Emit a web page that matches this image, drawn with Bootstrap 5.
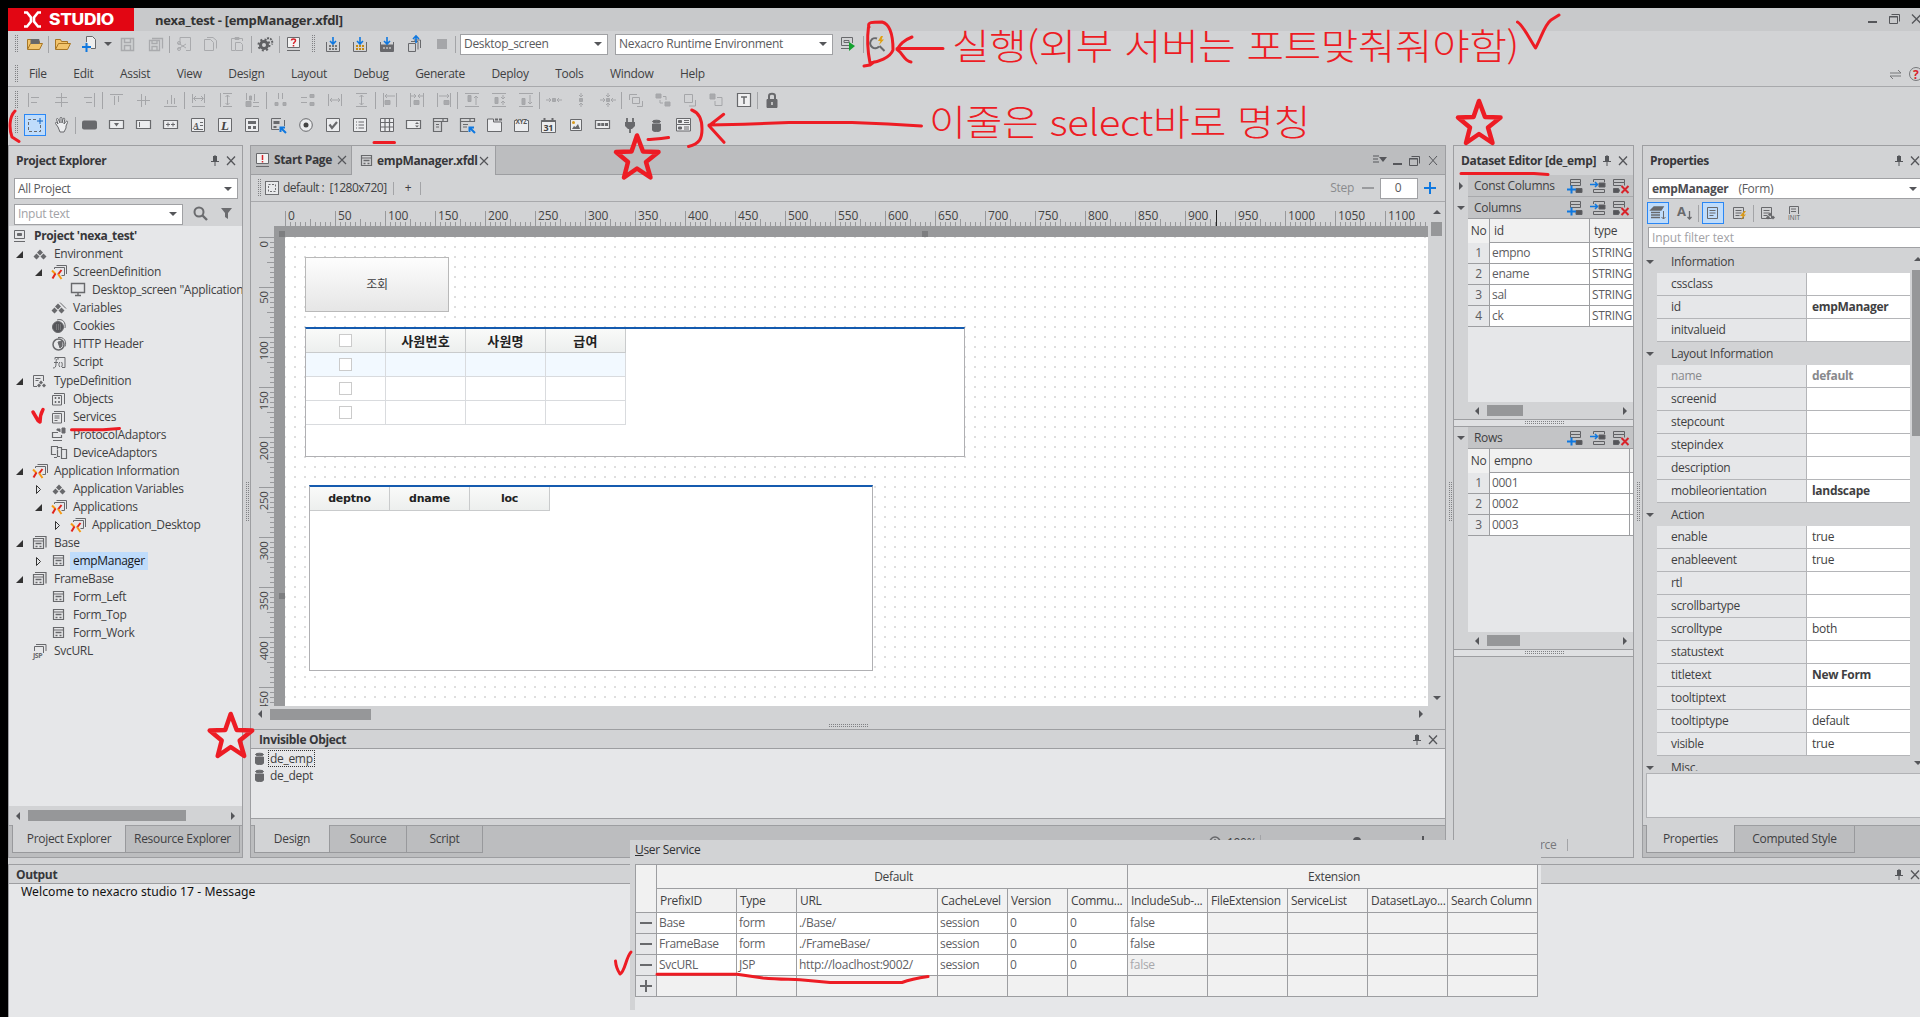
<!DOCTYPE html>
<html lang="ko">
<head>
<meta charset="utf-8">
<title>nexa_test - [empManager.xfdl]</title>
<link href="https://cdn.jsdelivr.net/npm/bootstrap@5.3.0/dist/css/bootstrap.min.css" rel="stylesheet">
<style>
:root{--bg:#d2d3d5;--line:#9d9ea1;--pale:#e6e7e9;--dark:#bcbdbf;--ink:#3f3f42;--dim:#67676b}
html,body{width:1920px;height:1017px;overflow:hidden;background:#000}
body{font-family:"Open Sans","Noto Sans","Noto Sans CJK KR",sans-serif;font-size:12px;line-height:16px;letter-spacing:-.3px;color:var(--ink);padding:8px 0 0 8px}
svg{display:block;flex:none;overflow:visible}
.studio{width:1912px;height:1009px;background:var(--bg);overflow:hidden;position:relative}
.titlebar{height:23px;background:#c8c9cb}
.brand{width:126px;height:23px;background:#e20613}
.doc-title{margin-left:21px;font-size:13px;font-weight:700;letter-spacing:-.3px;color:#333}
.dots{background-image:conic-gradient(#808184 0 25%,transparent 0);background-size:2px 2px;flex:none}
.dots-v{width:4px;height:18px;margin:0 4px 0 6px}
.bar-line{border-bottom:1px solid #a8a9ac}
.slot{width:27px;height:24px;flex:none;display:flex;align-items:center;justify-content:center}
.vsep{width:1px;height:17px;background:#a3a4a7;flex:none}
.picked{width:22px;height:22px;background:#bfdcfb;border:1px solid #2a87f5}
.field{background:#fff;border:1px solid #a0a1a4;height:21px;padding:0 5px 0 3px;color:#5a5a5d;flex:none}
.tri-d{width:0;height:0;border:4px solid transparent;border-top:4px solid #55565a;border-bottom:0;flex:none}
.tri-u{width:0;height:0;border:4px solid transparent;border-bottom:4px solid #55565a;border-top:0;flex:none}
.tri-l{width:0;height:0;border:4px solid transparent;border-right:4px solid #55565a;border-left:0;flex:none}
.tri-r{width:0;height:0;border:4px solid transparent;border-left:4px solid #55565a;border-right:0;flex:none}
.pane{border:1px solid var(--line);background:var(--bg);overflow:hidden;flex:none}
.heading{font-weight:700;color:#37373a;letter-spacing:-.35px}
.pale{background:var(--pale)}
.thumb{background:#969799;height:11px;flex:none}
.tree-item{height:18px;padding-right:0;white-space:nowrap}
.tree-item .exp{width:20px;display:flex;justify-content:center;flex:none}
.tree-item .ico{width:22px;display:flex;justify-content:center;flex:none}
.tree-item .txt{padding:0 2px 0 3px;height:18px;line-height:17px}
.tree-item .lit{background:#bfdcfb;color:#17171a;padding-right:3px}
.foot{height:32px;background:var(--dark);border-top:1px solid var(--line);padding-left:2px}
.foot .ftab{height:27px;border:1px solid #98999c;border-top:0;margin-right:-1px;display:flex;align-items:center;justify-content:center;flex:none}
.foot .on{background:var(--bg);margin-top:-1px;height:28px}
.dtab{height:29px;flex:none;border-right:1px solid var(--line);border-bottom:1px solid var(--line);padding-left:5px}
.screen-size{margin-left:3px;letter-spacing:-.5px}
.canvas{background:#98999b;width:1154px;height:480px;padding:11px 0 0 11px}
.paper{position:relative;width:1143px;height:469px;background:#fff radial-gradient(#dedede 1.2px,transparent 1.3px);background-size:10px 10px;background-position:5px 5px;overflow:hidden}
.knob{position:absolute;width:6px;height:6px;background:#7d7e80}
.f-btn{position:absolute;left:20px;top:20px;width:144px;height:55px;border:1px solid #b9b9b9;background:linear-gradient(#fdfdfd,#e6e6e6)}
.f-grid{position:absolute;background:#fff;border:1px solid #b0b0b3;border-top:2px solid #155baf}
.f-row{height:24px;width:320px}
.f-sel{background:#f2f9ff}
.f-row>div{width:80px;border-right:1px solid #d9dbde;border-bottom:1px solid #d9dbde;display:flex;align-items:center;justify-content:center;flex:none}
.f-head>div{background:linear-gradient(#f9faf9,#edefee);border-color:#c9cbcc;font:700 11px "DejaVu Sans","Noto Sans CJK KR",sans-serif;letter-spacing:-.2px;color:#222}
.f-head>.ko{font-size:13px;letter-spacing:.2px}
.f-box{width:13px;height:13px;border:1px solid #cbcbcb;background:#fff}
.ds-bar{height:21px;background:#c3c4c6;margin-left:14px;padding-left:6px}
.ds-grid{margin-left:14px;background:var(--pale)}
.ds-row{height:21px;border-bottom:1px solid var(--line);background:#fff;color:#5c5c60}
.ds-row>div{border-right:1px solid var(--line);padding-left:2px;line-height:20px;flex:none;overflow:hidden}
.ds-row>.rest{flex:1 1 0;border-right:0}
.ds-row .no{width:22px;background:var(--pale);text-align:center;padding:0}
.ds-top,.ds-top .no{height:24px;background:#f1f1f1!important;color:var(--ink)}
.ds-top>div{line-height:24px;padding-left:4px}
.strip{height:8px;border-top:1px solid var(--line);border-bottom:1px solid var(--line);background:#dfe0e2;flex:none}
.p-row{height:23px;flex:none}
.p-row .gut{width:14px;flex:none}
.p-row .key{width:150px;background:var(--pale);border-bottom:1px solid #b4b5b8;border-right:1px solid #b4b5b8;padding-left:14px;line-height:22px;flex:none}
.p-row .val{width:103px;background:#fff;border-bottom:1px solid #b4b5b8;padding-left:5px;line-height:22px;flex:none;white-space:nowrap}
.p-cat{height:23px;padding-left:3px;flex:none}
.us{position:absolute;left:622px;top:832px;width:911px;height:170px;background:var(--pale);border-left:5px solid var(--bg)}
.us-title{height:25px;background:var(--bg);border-bottom:1px solid var(--line);color:#2f2f32;line-height:20px}
.us table{border-collapse:collapse;table-layout:fixed;width:903px;color:#606064;margin-top:-1px}
.us td,.us th{border:1px solid var(--line);height:21px;padding:0 0 0 2px;line-height:18px;font-weight:400;background:#fff;overflow:hidden;white-space:nowrap}
.us th{height:24px;background:#f1f1f1;color:var(--ink);padding-left:3px}
.us td.off{background:#f1f1f1}.us td.pl{background:var(--pale);padding-left:4px}
.log{padding-left:12px;color:#111;font:12.200px/16px "Noto Sans","DejaVu Sans",sans-serif;letter-spacing:.03px}
.marks{position:absolute;left:-8px;top:-8px;z-index:9;pointer-events:none}
</style>
<script src="https://cdn.jsdelivr.net/npm/bootstrap@5.3.0/dist/js/bootstrap.bundle.min.js"></script>
</head>
<body>
<div class="studio d-flex flex-column">
  <div class="titlebar d-flex align-items-center flex-shrink-0">
    <div class="brand"><svg width="126" height="23"><g fill="none" stroke="#fff" stroke-width="2.6"><path d="M16 4.5h3l4 5v4l-4 5h-3"/><path d="M33 4.500h-3l-4 5v4l4 5h3"/></g><text x="41" y="16.500" fill="#fff" font-family="Inter,Roboto,sans-serif" font-weight="800" font-size="15.500" textLength="65" lengthAdjust="spacingAndGlyphs">STUDIO</text></svg></div>
    <div class="doc-title">nexa_test - [empManager.xfdl]</div>
    <div class="ms-auto d-flex align-items-center"><svg width="60" height="23" fill="none" stroke="#55565a"><path d="M8 14h9" stroke-width="2"/><path d="M29.500 8.500h8v7h-8zM31.500 6.500h8v7M29 9h9"/><path d="M52 6.500l9 9M61 6.500l-9 9" stroke-width="1.300"/></svg></div>
  </div>

  <div class="d-flex align-items-center flex-shrink-0" style="height:26px" id="bar1"></div>

  <div class="d-flex align-items-center flex-shrink-0 bar-line pt-1" style="height:30px">
    <div class="dots dots-v"></div>
    <div class="d-flex" id="menus" style="margin-left:7px;gap:26.5px"></div>
    <svg class="ms-auto" width="30" height="18" fill="none" stroke="#77787b"><path d="M0 8h11l-3-3M11 11H0l3 3"/><circle cx="26" cy="9" r="6.500"/><text x="23" y="13.500" fill="#d8232a" stroke="none" font-size="12" font-weight="700">?</text></svg>
  </div>

  <div class="d-flex align-items-center flex-shrink-0" style="height:26px" id="bar2"></div>
  <div class="d-flex align-items-center flex-shrink-0" style="height:24px" id="bar3"></div>

  <div class="d-flex flex-shrink-0" style="height:713px;margin-top:8px">

    <!-- Project explorer -->
    <section class="pane d-flex flex-column" style="width:235px">
      <div class="d-flex align-items-center flex-shrink-0" style="height:32px;padding:0 6px 2px 7px"><span class="heading">Project Explorer</span><span class="ms-auto" data-i="pinx"></span></div>
      <div class="field d-flex align-items-center justify-content-between" style="width:224px;margin-left:5px">All Project<i class="tri-d"></i></div>
      <div class="d-flex align-items-center" style="margin:4px 0 0 5px;height:22px">
        <div class="field d-flex align-items-center justify-content-between" style="width:169px;color:#a2a2a6">Input text<i class="tri-d"></i></div>
        <svg class="ms-2" width="46" height="18" fill="none" stroke="#6b6c6f"><circle cx="8" cy="7" r="4.500" stroke-width="2"/><path d="M11 10l5 5" stroke-width="2.400"/><path d="M30 3h11l-4 5v6l-3-2V8z" fill="#6b6c6f" stroke="none"/></svg>
      </div>
      <div class="pale flex-grow-1 overflow-hidden" style="margin-top:1px;padding-top:1px" id="tree"></div>
      <div class="d-flex align-items-center flex-shrink-0" style="height:19px;padding:0 7px"><i class="tri-l"></i><div class="thumb" style="width:158px;margin-left:8px"></div><i class="tri-r ms-auto"></i></div>
      <div class="foot d-flex flex-shrink-0" style="padding-left:3px"><div class="ftab on" style="width:114px">Project Explorer</div><div class="ftab" style="width:115px">Resource Explorer</div></div>
    </section>

    <div class="d-flex align-items-center justify-content-center" style="width:7px"><div class="dots" style="width:4px;height:40px"></div></div>

    <!-- Form editor -->
    <section class="pane d-flex flex-column" style="width:1196px">
      <div class="d-flex flex-shrink-0" style="height:29px;background:var(--dark)">
        <div class="dtab d-flex align-items-center heading" style="width:101px"><span data-i="start"></span><span style="margin-left:4px">Start Page</span><span class="ms-auto me-1" data-i="x"></span></div>
        <div class="dtab d-flex align-items-center heading border-bottom-0" style="width:144px;padding-left:9px;background:var(--bg)"><span data-i="form"></span><span style="margin-left:4px">empManager.xfdl</span><span class="ms-auto" style="margin-right:6px" data-i="x"></span></div>
        <div class="flex-grow-1 d-flex align-items-center justify-content-end" style="border-bottom:1px solid var(--line)"><svg width="72" height="16" fill="none" stroke="#55565a"><path d="M0 4h6M0 7h5M0 10h6"/><path d="M6 5h8l-4 5z" fill="#55565a" stroke="none"/><path d="M20 12h9" stroke-width="2"/><path d="M36.500 6.500h8v7h-8zM38.500 4.500h8v7M36 7h9"/><path d="M56 4l8 9M64 4l-8 9"/></svg></div>
      </div>
      <div class="d-flex align-items-center flex-shrink-0 bar-line" style="height:27px">
        <div class="dots dots-v"></div><svg width="15" height="15" fill="#e9eaec" stroke="#6e6f72"><rect x=".5" y=".5" width="13" height="13"/><rect x="3.500" y="3.500" width="7" height="7" stroke-dasharray="2 1.500"/></svg>
        <span class="screen-size">default :&nbsp; [1280x720]</span><i class="vsep" style="margin-left:6px;height:13px"></i><span style="margin-left:11px;width:12px">+</span><i class="vsep" style="margin-left:3px;height:13px"></i>
        <span class="ms-auto" style="color:#8a8b8e">Step</span><svg class="ms-2" width="12" height="12"><path d="M0 6h12" stroke="#9a9b9e" stroke-width="2"/></svg>
        <div class="field d-flex align-items-center justify-content-center" style="width:38px;margin-left:6px">0</div>
        <svg style="margin:0 5px" width="17" height="14"><path d="M1 7h12M7 1v12" stroke="#0f78e0" stroke-width="2"/></svg>
      </div>
      <div class="d-flex flex-shrink-0" style="height:504px">
        <svg id="vrule" width="23" height="504"></svg>
        <div><svg id="hrule" width="1154" height="24"></svg>
          <div class="canvas position-relative">
            <i class="knob" style="left:5px;top:5px"></i><i class="knob" style="left:648px;top:5px"></i><i class="knob" style="left:5px;top:367px"></i>
            <div class="paper">
              <div class="f-btn d-flex align-items-center justify-content-center">조회</div>
              <div class="f-grid" style="left:20px;top:90px;width:660px;height:130px">
                <div class="f-row f-head d-flex"><div><i class="f-box"></i></div><div class="ko">사원번호</div><div class="ko">사원명</div><div class="ko">급여</div></div>
                <div class="f-row f-sel d-flex"><div><i class="f-box"></i></div><div></div><div></div><div></div></div>
                <div class="f-row d-flex"><div><i class="f-box"></i></div><div></div><div></div><div></div></div>
                <div class="f-row d-flex"><div><i class="f-box"></i></div><div></div><div></div><div></div></div>
              </div>
              <div class="f-grid" style="left:24px;top:248px;width:564px;height:186px"><div class="f-row f-head d-flex"><div>deptno</div><div>dname</div><div>loc</div></div></div>
            </div>
          </div></div>
        <div class="d-flex flex-column align-items-center" style="width:17px"><i class="tri-u" style="margin-top:8px"></i><div style="width:11px;height:14px;background:#969799;margin-top:8px"></div><i class="tri-d mt-auto" style="margin-bottom:6px"></i></div>
      </div>
      <div class="d-flex align-items-center flex-shrink-0" style="height:16px;padding:0 22px 0 7px"><i class="tri-l"></i><div class="thumb" style="width:101px;margin-left:8px"></div><i class="tri-r ms-auto"></i></div>
      <div class="d-flex justify-content-center flex-shrink-0 bar-line" style="height:8px;border-color:var(--line)"><div class="dots" style="width:40px;height:4px;margin-top:2px"></div></div>
      <div class="d-flex align-items-center flex-shrink-0 bar-line" style="height:19px;padding:1px 7px 0 8px;border-color:var(--line)"><span class="heading">Invisible Object</span><span class="ms-auto" data-i="pinx"></span></div>
      <div class="pale flex-shrink-0" style="height:70px;border-bottom:1px solid var(--line);padding:1px 0 0 4px">
        <div class="d-flex align-items-center" style="height:17px"><span data-i="db"></span><span style="border:1px dotted #333;padding:0 1px;margin-left:3px;line-height:15px">de_emp</span></div>
        <div class="d-flex align-items-center" style="height:17px"><span data-i="db"></span><span style="margin-left:5px">de_dept</span></div>
      </div>
      <div class="foot d-flex mt-auto flex-shrink-0" style="padding-left:3px"><div class="ftab on" style="width:76px">Design</div><div class="ftab" style="width:78px">Source</div><div class="ftab" style="width:77px">Script</div>
        <div class="ms-auto d-flex" style="width:236px;height:26px;padding-top:9px"><svg width="14" height="14" fill="none" stroke="#66676a" stroke-width="1.500"><circle cx="6" cy="7" r="5"/><path d="M6 4v3h3"/></svg><span class="ms-1">100%</span><i class="vsep" style="margin-left:4px"></i><svg class="ms-1" width="170" height="14"><path d="M0 6h9" stroke="#55565a" stroke-width="2"/><circle cx="92" cy="6" r="4" fill="#55565a"/><path d="M158 1v10M153 6h10" stroke="#55565a" stroke-width="2"/></svg></div></div>
    </section>

    <div class="d-flex align-items-center justify-content-center" style="width:7px"><div class="dots" style="width:4px;height:40px"></div></div>

    <!-- Dataset editor -->
    <section class="pane d-flex flex-column" style="width:181px">
      <div class="d-flex align-items-center flex-shrink-0" style="height:29px;padding:1px 5px 0 7px"><span class="heading text-nowrap">Dataset Editor [de_emp]</span><span class="ms-auto" data-i="pinx"></span></div>
      <div class="d-flex align-items-center position-relative"><i class="tri-r position-absolute" style="left:5px"></i><div class="ds-bar bar-line d-flex align-items-center flex-grow-1" style="height:22px">Const Columns<span class="ms-auto" data-i="dsops"></span></div></div>
      <div class="d-flex align-items-center position-relative"><i class="tri-d position-absolute" style="left:3px"></i><div class="ds-bar d-flex align-items-center flex-grow-1">Columns<span class="ms-auto" data-i="dsops"></span></div></div>
      <div class="ds-grid" style="height:184px;border-top:1px solid var(--line)">
        <div class="ds-row ds-top d-flex"><div class="no">No</div><div style="width:100px">id</div><div class="rest">type</div></div>
        <div class="ds-row d-flex"><div class="no">1</div><div style="width:100px">empno</div><div class="rest">STRING</div></div>
        <div class="ds-row d-flex"><div class="no">2</div><div style="width:100px">ename</div><div class="rest">STRING</div></div>
        <div class="ds-row d-flex"><div class="no">3</div><div style="width:100px">sal</div><div class="rest">STRING</div></div>
        <div class="ds-row d-flex"><div class="no">4</div><div style="width:100px">ck</div><div class="rest">STRING</div></div>
      </div>
      <div class="d-flex align-items-center flex-shrink-0" style="height:17px;padding:0 6px 0 21px"><i class="tri-l"></i><div class="thumb" style="width:36px;margin-left:8px"></div><i class="tri-r ms-auto"></i></div>
      <div class="strip d-flex justify-content-center"><div class="dots" style="width:40px;height:4px;margin-top:1px"></div></div>
      <div class="d-flex align-items-center position-relative"><i class="tri-d position-absolute" style="left:3px"></i><div class="ds-bar d-flex align-items-center flex-grow-1">Rows<span class="ms-auto" data-i="dsops"></span></div></div>
      <div class="ds-grid" style="height:184px;border-top:1px solid var(--line)">
        <div class="ds-row ds-top d-flex"><div class="no">No</div><div style="width:140px">empno</div></div>
        <div class="ds-row d-flex"><div class="no">1</div><div style="width:140px">0001</div></div>
        <div class="ds-row d-flex"><div class="no">2</div><div style="width:140px">0002</div></div>
        <div class="ds-row d-flex"><div class="no">3</div><div style="width:140px">0003</div></div>
      </div>
      <div class="d-flex align-items-center flex-shrink-0" style="height:17px;padding:0 6px 0 21px"><i class="tri-l"></i><div class="thumb" style="width:33px;margin-left:8px"></div><i class="tri-r ms-auto"></i></div>
      <div class="strip d-flex justify-content-center"><div class="dots" style="width:40px;height:4px;margin-top:1px"></div></div>
      <div class="mt-auto d-flex align-items-center" style="height:24px;padding-left:86px;color:#77787b">rce<i class="vsep" style="margin-left:10px;height:12px"></i></div>
    </section>

    <div class="d-flex align-items-center justify-content-center" style="width:8px"><div class="dots" style="width:4px;height:40px"></div></div>

    <!-- Properties -->
    <section class="pane d-flex flex-column border-end-0" style="width:278px">
      <div class="d-flex align-items-center flex-shrink-0" style="height:32px;padding:0 0 2px 7px"><span class="heading">Properties</span><span class="ms-auto" data-i="pinx"></span></div>
      <div class="field d-flex align-items-center border-end-0" style="margin-left:5px"><b style="color:#4c4c50">empManager</b><span style="margin-left:10px">(Form)</span><i class="tri-d ms-auto" style="margin-right:-2px"></i></div>
      <div class="d-flex align-items-center" style="height:28px;padding-left:1px" id="pbar"></div>
      <div class="field d-flex align-items-center border-end-0" style="margin-left:5px;color:#a2a2a6;letter-spacing:-.1px">Input filter text</div>
      <div class="d-flex overflow-hidden" style="height:521px;margin-top:2px">
        <div id="props" style="width:267px"></div>
        <div class="d-flex flex-column align-items-center" style="width:14px;margin-left:2px"><i class="tri-u" style="margin-top:7px"></i><div style="width:12px;height:166px;background:#969799;margin-top:9px"></div><i class="tri-d mt-auto" style="margin-bottom:6px"></i></div>
      </div>
      <div class="pale" style="height:45px;margin:2px 0 0 3px;border:1px solid #b1b2b5;border-right:0"></div>
      <div class="foot d-flex mt-auto flex-shrink-0" style="padding-left:3px"><div class="ftab on" style="width:89px">Properties</div><div class="ftab" style="width:121px">Computed Style</div></div>
    </section>
  </div>

  <!-- Output -->
  <section class="flex-grow-1 pale" style="margin-top:6px;border:1px solid var(--line);border-width:1px 0 0 1px">
    <div class="d-flex align-items-center bar-line" style="height:19px;background:var(--bg);border-color:var(--line);padding:1px 0 0 7px"><span class="heading">Output</span><span class="ms-auto" data-i="pinx"></span></div>
    <div class="log">Welcome to nexacro studio 17 - Message</div>
  </section>

  <!-- User service window -->
  <div class="us">
    <div class="us-title"><u>U</u>ser Service</div>
    <table id="us"></table>
  </div>

  <!-- Handwritten notes -->
  <svg class="marks" width="1920" height="1017" fill="none" stroke="#ed1c24" stroke-width="3" stroke-linecap="round" stroke-linejoin="round">
    <path d="M869 27C867 22 872 22 882 22C890 24 893 36 893 50C890 58 878 62 870 63C867 48 867 38 868.500 27M864 66L870 65 874 62"/>
    <path d="M943 48.500H897M912 37C902 41 900 45 897 49.500C903 53 904 61 911 62"/>
    <path d="M1517.500 22C1523 25 1530 40 1535.500 48C1541 38 1545 24 1551 20L1559 15"/>
    <path d="M691.700 110C700 113 702 122 702 129C702 138 700 144 688.500 146.500"/>
    <path d="M921.500 126L888 124 852 122.500H789L744 124.300 709 125M723.700 114.300L709 125.700 724 142.300"/>
    <path d="M15 111C9 117 9 129 12 137L19 141.500M374 142.500H394.500M648 139.500C655 139 660 139 668.500 137.500"/>
    <path d="M1461 173.500H1534L1548 174.600M71.500 429.700H103L119.500 428.500M657 974.300H737L763 978C780 979.700 790 979 800 979.700L830 982.500H902C910 979.500 918 978 928 976.500"/>
    <path d="M33 412L38 420.500 40 422C40 417 41 413 43 409.500" stroke-width="3.500"/>
    <path d="M615.500 961C616 968 618 971 620 974C625 972 626 957 631 952"/>
    <g stroke-width="4.500"><path id="star" d="M637 135.500L643 151.500 658.500 152 646 162 650.500 177.500 637 168.500 624 177.500 628 162 616 152 631.500 151.500Z"/>
    <use href="#star" x="842" y="-34.500"/><use href="#star" x="-406.300" y="578.500"/></g>
    <g fill="#ed1c24" stroke="none" font-family="'Noto Sans CJK KR',sans-serif" font-weight="300" font-size="36.500">
      <text x="952" y="60" textLength="567" lengthAdjust="spacingAndGlyphs">실행(외부 서버는 포트맞춰줘야함)</text>
      <text x="929" y="135.500" font-size="36" textLength="381" lengthAdjust="spacingAndGlyphs">이줄은 select바로 명칭</text>
    </g>
  </svg>
</div>

<script>
const G='#68696c', L='#a9aaad', B='#0f78e0';
const svg=(w,h,body,c=G)=>`<svg width="${w}" height="${h}" fill="none" stroke="${c}">${body}</svg>`;
const win='<path d="M.5.5h13v13H.5z" fill="#ecedef"/>';
const I={
 pinx:svg(25,12,'<path d="M2.500 1v5M5.500 1v5M0 6.500h8M4 7v4" stroke-width="1"/><path d="M3 1h2v5H3z" fill="#55565a"/><path d="M16 1.500l8 8.500M24 1.500l-8 8.500" stroke-width="1.300"/>','#55565a'),
 x:svg(10,10,'<path d="M1 1l8 8M9 1L1 9" stroke-width="1.200"/>','#55565a'),
 start:svg(14,14,'<path d="M.5.5h12v10H.5zM0 13.500h13" fill="#f3f3f3"/><path d="M6.500 2v5M6.500 8v1.500" stroke="#d8232a" stroke-width="1.500"/>'),
 form:svg(12,12,'<path d="M.5.5h10v10H.5zM0 3h11" stroke-width="1.200"/><path d="M2.500 5.500h6M2.500 8.500h2M6.500 8.500h2" stroke-width="1.600"/>'),
 forms:svg(14,14,'<path d="M.5 2.500h10v10H.5zM0 5h11M2 .5h11v11" stroke-width="1.200"/><path d="M2.500 7.500h6M2.500 10.500h2M6.500 10.500h2" stroke-width="1.500"/>'),
 db:svg(10,13,'<path d="M.5 5v6c0 2 8 2 8 0V5z" fill="#68696c"/><ellipse cx="4.500" cy="2.500" rx="4" ry="1.300" fill="#68696c"/>'),
 proj:svg(12,13,'<path d="M.5.5h10v8h-10zM0 11.500h11"/><path d="M3.500 3.500h4v2h-4z" fill="#68696c"/>'),
 env:svg(14,11,'<path d="M7 .5l3 3-3 3-3-3zM3.500 4.500l3 3-3 3-3-3zM10.500 4.500l3 3-3 3-3-3z" fill="#68696c" stroke="none"/>'),
 vars:svg(16,12,'<path d="M7 1.500l3 3-3 3-3-3zM3.500 5.500l3 3-3 3-3-3zM10.500 5.500l3 3-3 3-3-3z" fill="#68696c" stroke="none"/><path d="M9 .5l6 6"/>'),
 xapp:svg(16,14,'<path d="M3.500 4V2.500h10v8h-3M5.500.5h10V9"/><path d="M1 5.500L4.500 9" stroke="#f59a12" stroke-width="2"/><path d="M4.500 8.500L1.500 13.500" stroke="#e2231a" stroke-width="2"/><path d="M10.500 5L7 9.500" stroke="#e2231a" stroke-width="2"/><path d="M7 9l3.500 5" stroke="#f59a12" stroke-width="2"/>'),
 screen:svg(16,14,'<path d="M1.500.5h13v9h-13zM5 12.500h6M8 10v2" stroke-width="1.400"/>'),
 cookie:svg(15,14,'<circle cx="6" cy="8" r="5.500" fill="#55565a"/><path d="M5 1c6-2 9 3 8 8"/><path d="M4 6h5M4 8h5M4 10h5" stroke="#999" stroke-dasharray="1 1"/>'),
 http:svg(15,14,'<circle cx="6.500" cy="7.500" r="5.500" stroke-width="1.500"/><path d="M6 5l4-1v5l-2 2z" fill="#68696c"/><path d="M6 .5c6-1 9 4 7 9"/>'),
 script:svg(14,13,'<path d="M3 3.500V1.500h10v10h-3M7 3c-3-1-3 2-3 5s-1 4-3 4M2 6.500h4M8 6c-1.500 1-1.500 4 0 5M9.500 6c1 1 1 4 0 5"/>'),
 type:svg(14,13,'<path d="M4 11.500H.5V.5h10V6M2.500 3.500h5M2.500 5.500h3"/><path d="M8 5.500l2 2-2 2-2-2zM6 8.500l2 2-2 2-2-2zM11 8.500l2 2-2 2-2-2z" fill="#68696c" stroke="none"/>'),
 obj:svg(14,13,'<path d="M.5 2.500h9v9.500h-9zM2 .5h10.500V11"/><path d="M3 4.500h1v1H3zM6.500 4.500h1v1h-1zM3 8.500h1v1H3zM6.500 8.500h1v1h-1z" fill="#68696c"/>'),
 svc:svg(14,13,'<path d="M.5 2.500h9v9.500h-9zM2 .5h10.500V11M2.500 5h5M2.500 7h5M2.500 9.500h3"/>'),
 prot:svg(16,14,'<path d="M7 4.500H1.500v5h9V7M2 12.500h9" stroke-width="1.200"/><path d="M6 2.500V1h3v3M11 0h3v5h-3z" fill="#68696c"/>'),
 dev:svg(16,14,'<path d="M7 .5H.5v8H5M3 11.500h3M6.500 3V1.500h4V3M6.500 3.500v7H9M10.500 3.500h5v9h-5z" stroke-width="1.200"/>'),
 jsp:svg(14,14,'<path d="M1.500 7V2.500h9V9M3 .5h10V7"/><text x="0" y="13.500" font-size="7" font-weight="700" fill="#68696c" stroke="none" letter-spacing="-.5">JSP</text>'),
 dsops:svg(62,16,'<path d="M3.500 1.500h10v3h-10zM3.500 4.500v3M3.500 7.500h10v-3"/><path d="M9 10.500h6v4H9z" fill="#55565a"/><path d="M0 11.500h9M4.500 7.500v8" stroke="#0f78e0" stroke-width="2"/><path d="M26.500 4V1.500h11V4M26.500 11.500h11v3h-11z"/><path d="M32 5h6v4h-6z" fill="#55565a"/><path d="M23 6.500h7M28 4l2.500 2.500L28 9" stroke="#0f78e0" stroke-width="1.500"/><path d="M46.500 1.500h11v3h-11zM46.500 4.500v3h8M57.500 4.500v3"/><path d="M46.500 10.500h5l1 2-1 2h-5z" fill="#55565a"/><path d="M54.500 8l7 7M61.500 8l-7 7" stroke="#d8232a" stroke-width="2"/>','#606164')
};
document.querySelectorAll('[data-i]').forEach(e=>{e.innerHTML=I[e.dataset.i];if(e.dataset.i==='dsops')e.style.paddingRight='4px'});

/* menu */
menus.innerHTML='File Edit Assist View Design Layout Debug Generate Deploy Tools Window Help'.split(' ').map(t=>`<span>${t}</span>`).join('');

/* main toolbar */
const slot=(s,w=27)=>`<div class="slot" style="width:${w}px">${s}</div>`, sep='<i class="vsep"></i>', grip='<div class="dots dots-v"></div>';
const fold='<path d="M.5 12V2.500h5l1 2h6V7M.5 12.500L3.500 6.500h12l-3 6z" fill="#f2c46c" stroke="#a87624"/>';
const basket=(c,f)=>svg(15,15,`<path d="M.5 5v9.500h13V5"/><path d="M3 9h2M6 9h2M9 9h2M3 12h2M6 12h2M9 12h2" stroke="${c}" stroke-width="2"/>${f}<path d="M7 0v6M4 4l3 3 3-3" stroke="${B}" stroke-width="1.600"/>`);
bar1.innerHTML=grip+slot(svg(16,14,fold+'<path d="M4 2.500h8v4H4z" fill="#666"/>'),26)+sep+slot(svg(16,14,fold))
 +slot(svg(15,16,'<path d="M4.500 6V.5h6l3 3v9H9" fill="#eee"/><path d="M0 11h9M4.500 7v9" stroke="#0f78e0" stroke-width="2"/>'))+slot('<i class="tri-d"></i>',9)
 +slot(svg(13,13,'<path d="M.5.5h12v12H.5zM3.500.5v4h6v-4M3.500 12V7.500h6V12" stroke-width="1.500"/>',L),31)+slot(svg(14,13,'<path d="M.5 2.500h10v10H.5zM3 2.500v3h5v-3M3 12V8.500h5V12M3 .5h10.500v10" stroke-width="1.300"/>',L),26)+sep
 +slot(svg(14,14,'<path d="M3 6V.5h10.500v13H9M1 6l8 5M1 12l8-5"/><circle cx="2" cy="6" r="1.500"/><circle cx="2" cy="12" r="1.500"/>',L))+slot(svg(13,14,'<path d="M.5 2.500h6l3 3v8h-9zM3 .5h6l3.500 3v8"/>',L))+slot(svg(13,14,'<path d="M4 13.500H.5v-12h11V4M4.500 5.500h5l2 2v6h-7zM4 .5h4v2H4z"/>',L))+sep
 +slot(svg(16,14,'<circle cx="6" cy="8" r="3.500" stroke-width="3"/><circle cx="6" cy="8" r="5.500" stroke-width="2" stroke-dasharray="2 2.300"/><path d="M9 1.500c4-1 6 2 5 6" stroke-width="2" stroke-dasharray="2 1"/>','#606164'))+sep
 +slot(svg(14,15,'<path d="M.5.5h12v10H.5zM0 13.500h13" fill="#f3f3f3"/><path d="M4.500 3.500c0-2 4-2 4 0s-2 1.500-2 3.500M6.500 8v1.500" stroke="#d8232a" stroke-width="1.500"/>'),28)
 +'<div style="margin-left:-3px">'+grip+'</div><div style="width:1px"></div>'+slot(basket('#777',''))+slot(basket('#c88a10',''))+slot(basket('#eee','<path d="M1 8h12v6H1z" fill="#68696c"/><path d="M3 11h8" stroke="#eee" stroke-dasharray="2 1"/>'))
 +slot(svg(14,16,'<path d="M.5 7.500h7v8h-7zM3 5.500h7v8M6 4h6.500v8"/><path d="M8 7V1M5 3l3-3 3 3" stroke="#0f78e0" stroke-width="1.600"/>'))+slot('<div style="width:10px;height:10px;background:#a5a6a9"></div>')+sep
 +'<div class="field d-flex align-items-center justify-content-between" style="width:148px;margin-left:4px">Desktop_screen<i class="tri-d"></i></div><div class="field d-flex align-items-center justify-content-between" style="width:218px;margin-left:7px">Nexacro Runtime Environment<i class="tri-d"></i></div>'
 +slot(svg(14,14,'<path d="M8 8.500H.5v-8h11V6M0 11.500h8M3 3.500h5v2H3z"/><path d="M8 5l6 4-6 5z" fill="#12a22e" stroke="none"/>'),30)+sep+slot(svg(16,16,'<path d="M7 2.500a5 5 0 1 0 2 8M9.500 10l5 5" stroke-width="2"/><path d="M11 0L8 5h2.500L9 9l5-5.500h-2.500L13 0z" fill="#e0a010" stroke="none"/>'));

/* alignment toolbar: every glyph is drawn in a 16 x 14 box */
const A=[
 ['<path d="M1.500 0v14M4 4.500h8M4 9.500h6"/>','<path d="M7.500 0v14M2 4.500h11M1 9.500h13"/>','<path d="M13.500 0v14M3 4.500h8M5 9.500h6"/>'],
 ['<path d="M1 1.500h13M5.500 3v9M9.500 3v6"/>','<path d="M1 7.500h13M5.500 1v13M9.500 3v9"/>','<path d="M1 13.500h13M4.500 7v4M8.500 2v9M11.500 5v6"/>'],
 ['<path d="M1.500 1v9M13.500 1v9M3 5.500h9M1 13.500h13M5 3L2.500 5.500 5 8M10 3l2.500 2.500L10 8"/>','<path d="M2.500 0v14M5 .5h9M5 13.500h9M9.500 2v10M7.500 4l2-2 2 2M7.500 10l2 2 2-2"/>','<path d="M1.500 0v7M5.500 3v4M9.500 1v7M8 9.500h6M8 13.500h6"/><path d="M1 8.500h5v5H1zM4.500 3h2v4h-2z" fill="#a9aaad"/>'],
 ['<path d="M5.500 0v6M9.500 0v6"/><path d="M2 9.500h3v3H2zM10 9.500h3v3h-3z" fill="#a9aaad"/>','<path d="M1 4.500h6M1 9.500h6"/><path d="M10 1.500h4v3h-4zM10 9.500h4v3h-4z" fill="#a9aaad"/>','<path d="M1.500 1v12M14.500 1v12M3 7h10M5 5L3 7l2 2M11 5l2 2-2 2"/>','<path d="M2 .5h11M2 13.500h11M7.500 2v10M5.500 4l2-2 2 2M5.500 10l2 2 2-2"/>'],
 ['<path d="M1.500 0v14M14.500 0v14M3 3h10M5 1L3 3l2 2"/><path d="M3 7.500h5v4H3z" fill="#a9aaad"/>','<path d="M1.500 0v14M14.500 0v14M2 3h5M9 3h5M5 1l2 2-2 2M11 1L9 3l2 2"/><path d="M5 7.500h5v4H5z" fill="#a9aaad"/>','<path d="M1.500 0v14M14.500 0v14M3 3h10M11 1l2 2-2 2"/><path d="M8 7.500h5v4H8z" fill="#a9aaad"/>'],
 ['<path d="M1 .5h14M1 13.500h14M12 3v9M10 5l2-2 2 2"/><path d="M4 2.500h3v6H4z" fill="#a9aaad"/>','<path d="M1 .5h14M1 13.500h14M12 2v3M12 9v3M10 4l2 2 2-2M10 10l2-2 2 2"/><path d="M4 4.500h3v6H4z" fill="#a9aaad"/>','<path d="M1 .5h14M1 13.500h14M12 2v9M10 9l2 2 2-2"/><path d="M4 5.500h3v6H4z" fill="#a9aaad"/>'],
 ['<path d="M0 7h5M11 7h5M3 5l2 2-2 2M13 5l-2 2 2 2"/><path d="M6.500 5.500h3v3h-3z" fill="#a9aaad"/>','<path d="M8 0v4M8 10v4M6 2l2 2 2-2M6 12l2-2 2 2"/><path d="M6.500 5.500h3v3h-3z" fill="#a9aaad"/>','<path d="M0 7h5M11 7h5M8 0v4M8 10v4M3 5l2 2-2 2M13 5l-2 2 2 2M6 2l2 2 2-2M6 12l2-2 2 2"/><path d="M6.500 5.500h3v3h-3z" fill="#a9aaad"/>'],
 ['<path d="M4.500 4.500h7v6h-7zM1.500 7V1.500H9M14.500 8v5.500H9"/>','<path d="M1 1h5v4H1zM10 9h5v4h-5z" fill="#a9aaad"/><path d="M8 3.500h3V7M5 7v3h3"/>','<path d="M2.500 1.500h8v8h-8zM13.500 7v6H7"/>','<path d="M1 1h5v5H1z" fill="#a9aaad"/><path d="M8 4.500h5v8H6V8"/>']
];
bar2.innerHTML=grip+'<div style="margin-left:-1px"></div>'+A.map(g=>g.map(p=>slot(svg(16,14,p,'#a5a6a9'))).join('')).join(sep)
 +slot(svg(14,14,'<path d="M.5.5h13v13H.5z" fill="#f0f0f1" stroke-width="1.200"/><path d="M4 4h6M7 4v7" stroke-width="1.500"/>'))+sep+slot(svg(12,15,'<path d="M1 6.500h10v8H1z" fill="#68696c"/><path d="M3 6V3c0-3 6-3 6 0v3" stroke-width="2"/><path d="M6 9v3" stroke="#ddd" stroke-width="1.500"/>'));

/* component toolbar */
const wide='<path d="M.5 2.500h14v8H.5z" fill="#ecedef" stroke-width="1.200"/>', cur='<path d="M15 15l-5-5M9.500 14V9.500H14" stroke="#0f78e0" stroke-width="2"/>';
const C=[
 svg(15,14,'<rect x="0" y="2.500" width="15" height="9" rx="2" fill="#68696c" stroke="none"/>'),
 svg(15,14,wide+'<path d="M5 5h5L7.500 8.500z" fill="#68696c" stroke="none"/>'), svg(15,14,wide+'<path d="M3.500 4v5"/>'), svg(15,14,wide+'<path d="M3 6.500h4M5 4.500v4M8 6.500h4M10 4.500v4"/>'),
 svg(14,14,win+'<text x="2" y="10.500" font-size="9" font-weight="700" font-style="italic" font-family="Liberation Serif" fill="#555" stroke="none">A</text><path d="M9 4.500h3M9 7.500h3M3 11.500h9"/>'),
 svg(14,14,win+'<text x="3" y="11.500" font-size="13" font-weight="700" font-style="italic" font-family="Liberation Serif" fill="#444" stroke="none">L</text>'),
 svg(14,14,win+'<path d="M3 3h8v3H3zM3 8h3v3H3zM8 8h3v3H8z" fill="#68696c" stroke="none"/>'),
 svg(15,15,'<path d="M10 .5H.5v11H8M13.500 2v6"/><path d="M2.500 3h6v3h-6zM2.500 8h3v2h-3z" fill="#68696c" stroke="none"/>'+cur),
 svg(14,14,'<circle cx="7" cy="7" r="6.300" fill="#ecedef"/><circle cx="7" cy="7" r="2.500" fill="#444" stroke="none"/>'),
 svg(14,14,win+'<path d="M3.500 6.500L6 10l5-6" stroke-width="2.200"/>'),
 svg(14,14,win+'<path d="M3 4h1M3 7h1M3 10h1M5.500 4h5.500M5.500 7h5.500M5.500 10h5.500"/>'),
 svg(14,14,win+'<path d="M.5 4.500h13M.5 9h13M5 .5v13M9.500.5v13" stroke-width="1.200"/>'),
 svg(15,14,wide+'<path d="M9 6h4l-2-2zM9 7.500h4l-2 2z" fill="#68696c" stroke="none"/>'),
 svg(15,14,'<path d="M.5.5h14v3H.5zM.5 3.500v10h8v-10M3 6.500h3M3 9h3M10 .5v3" stroke-width="1.200"/>'),
 svg(15,15,'<path d="M.5.5h14v3H.5zM.5 3.500v10H8M3 6.500h5M3 9h4M10 .5v3" stroke-width="1.200"/>'+cur),
 svg(15,14,'<path d="M.5 1h6v3h8v9.500H.5z" fill="#ecedef"/><path d="M8 1.500h3M12 1.500h3" stroke-width="2"/>'),
 svg(15,14,'<path d="M2 2.500H.5v11h14v-11H13" fill="#ecedef"/><text x="1.500" y="5.500" font-size="6.500" font-weight="700" fill="#555" stroke="none" letter-spacing="-.3">XYZ</text>'),
 svg(15,15,'<path d="M.5 2.500h14v12H.5z" fill="#ecedef"/><path d="M.5 3h14M3.500 0v3M11.500 0v3" stroke-width="2"/><text x="2.500" y="13" font-size="9" font-weight="700" fill="#444" stroke="none" letter-spacing="-.4">31</text>'),
 svg(12,12,'<path d="M.5.5h11v11H.5z" fill="#ecedef"/><circle cx="3.500" cy="3.500" r="1.500" fill="#d99a1c" stroke="none"/><path d="M2 10l2-3 1.500 1L8 5l2 5z" fill="#68696c" stroke="none"/>'),
 svg(15,14,wide+'<path d="M2.500 6.500h3M6.200 6.500h3M10 6.500h3" stroke-width="3"/>'),
 svg(12,15,'<path d="M3 0v4M9 0v4M6 10v5" stroke-width="1.800"/><path d="M1 4h10v4l-3 3H4L1 8z" fill="#68696c" stroke="none"/>'),
 I.db,
 svg(15,14,'<path d="M.5.5h14v6H.5zM.5 6.500h14v6.500H.5z" fill="#ecedef"/><path d="M2.500 2.500h3v2h-3zM2.500 9h3v2h-3z" fill="#68696c"/><path d="M8 2.500h5M8 4.500h5M8 9h5M8 11h5"/>')
];
bar3.innerHTML=grip+slot('<div class="picked d-flex align-items-center justify-content-center">'+svg(14,14,'<path d="M8 1.500H.5v12h12V7" stroke-dasharray="3 2"/><path d="M12 0v6M9 3h6" stroke="#0f62c0"/>')+'</div>',26)
 +slot(svg(15,16,'<path d="M4 10L1.500 6.500C1 5 3 5 4 7L2.500 2.500c0-1.500 1.500-1 2 0L6 6V1.500c0-1.500 2-1.500 2 0V6l1-4c.5-1.500 2-1 1.700.5L10 7l2-2.500c1-1 2 0 1.500 1L12 9v2l-2 4H6z" fill="#ecedef"/>'))+sep+C.map(s=>slot(s)).join('');

/* project tree: level, expander (o open, c closed, - none), icon, label */
const T=[[-1,'-','proj',"Project 'nexa_test'"],[0,'o','env','Environment'],[1,'o','xapp','ScreenDefinition'],[2,'-','screen','Desktop_screen "Application'],[1,'-','vars','Variables'],[1,'-','cookie','Cookies'],[1,'-','http','HTTP Header'],[1,'-','script','Script'],
[0,'o','type','TypeDefinition'],[1,'-','obj','Objects'],[1,'-','svc','Services'],[1,'-','prot','ProtocolAdaptors'],[1,'-','dev','DeviceAdaptors'],[0,'o','xapp','Application Information'],[1,'c','env','Application Variables'],[1,'o','xapp','Applications'],[2,'c','xapp','Application_Desktop'],[0,'o','forms','Base'],[1,'c','form','empManager'],[0,'o','forms','FrameBase'],[1,'-','form','Form_Left'],[1,'-','form','Form_Top'],[1,'-','form','Form_Work'],[0,'-','jsp','SvcURL']];
const ex={o:'<svg width="7" height="7"><path d="M7 0v7H0z" fill="#333"/></svg>',c:'<svg width="7" height="9"><path d="M1.500.500l4 4-4 4z" fill="none" stroke="#333"/></svg>','-':''};
tree.innerHTML=T.map(([l,e,i,t],n)=>`<div class="tree-item d-flex align-items-center" style="padding-left:${Math.max(l,0)*19}px;${n==8?'margin-top:1px':''}">${l<0?'':`<span class="exp">${ex[e]}</span>`}<span class="ico">${I[i]}</span><span class="txt ${t=='empManager'?'lit':''} ${n?'':'heading'}">${t}</span></div>`).join('');

/* properties */
const P=['#Information','cssclass','id=*empManager','initvalueid','#Layout Information','name=~default','screenid','stepcount','stepindex','description','mobileorientation=*landscape','#Action','enable=true','enableevent=true','rtl','scrollbartype','scrolltype=both','statustext','titletext=*New Form','tooltiptext','tooltiptype=default','visible=true','#Misc.'];
props.innerHTML=P.map(p=>{if(p[0]=='#')return `<div class="p-cat d-flex align-items-center"><i class="tri-d"></i><span style="margin-left:17px">${p.slice(1)}</span></div>`;
 let [k,v='']=p.split('='),b=v[0]=='*'||v[0]=='~',c=v[0]=='~'?'#88898c':'';if(b)v=v.slice(1);
 return `<div class="p-row d-flex"><div class="gut"></div><div class="key" ${c?`style="color:${c}"`:''}>${k}</div><div class="val ${b?'fw-bold':''}" ${c?`style="color:${c}"`:''}>${v}</div></div>`}).join('');
const doc='<path d="M.5.5h10v11H.5zM2.500 3.500h6M2.500 6h6M2.500 8.500h4"/>';
const pk=s=>'<div class="picked d-flex align-items-center justify-content-center">'+s+'</div>';
pbar.innerHTML=slot(pk(svg(14,14,'<path d="M0 4l3-3h9l-2 3zM0 6.500h9M0 9h9M0 11.500h9" fill="#68696c" stroke-width="1.400"/><path d="M12.500 5v8M10.500 11l2 2 2-2"/>')))+slot(svg(14,14,'<text x="-1" y="10" font-size="13" font-weight="700" fill="#68696c" stroke="none">A</text><path d="M11.500 5v8M9.500 11l2 2 2-2" stroke-width="1.300"/>'))+sep+slot(pk(svg(11,12,doc)))+slot(svg(13,13,doc+'<path d="M11 4L7 9h2.500L8 13l5-5.500h-2.500L13 4z" fill="#d99a1c" stroke="none"/>'))+sep+slot(svg(14,13,doc+'<path d="M9 5.500l2 2-2 2-2-2zM7 8.500l2 2-2 2-2-2zM12 8.500l2 2-2 2-2-2z" fill="#68696c" stroke="none"/>'))+slot(svg(13,14,'<path d="M1.500 8V.5h9V8M3 3h5M3 5.500h5"/><text x="0" y="14" font-size="6.500" fill="#555" stroke="none" letter-spacing="0">INIT</text>'));

/* rulers */
let h='',v='';
for(let i=0;i<=1140;i+=5){const t=i%50==0?9:i%25==0?17:20;h+=`M${i+11.5} ${t}V24`;}
for(let i=0;i<=465;i+=5){const t=i%50==0?8:i%25==0?16:19;v+=`M${t} ${i+35.5}H23`;}
let ht='',vt='';
for(let i=0;i<=1100;i+=50)ht+=`<text x="${i+14}" y="18">${i}</text>`;
for(let i=0;i<=400;i+=50)vt+=`<text transform="translate(17 ${i+39+String(i).length*6.4}) rotate(-90)">${i}</text>`;
vt+='<text transform="translate(17 508) rotate(-90)">450</text>';
hrule.innerHTML=`<path d="${h}" stroke="#98999c"/><path d="M942.500 8v16" stroke="#222"/><g fill="#444" letter-spacing="-.1">${ht}</g>`;
vrule.innerHTML=`<path d="${v}" stroke="#98999c"/><g fill="#444" font-size="11.500">${vt}</g>`;
vrule.style.overflow='hidden';

/* user service table */
const W=[21,80,60,141,70,60,60,80,80,80,80,90];
const R=[['−','Base','form','./Base/','session','0','0','false'],['−','FrameBase','form','./FrameBase/','session','0','0','false'],['−','SvcURL','JSP','http://loaclhost:9002/','session','0','0','~false'],['+']];
const sign=s=>svg(12,12,'<path d="M0 6h12" stroke-width="2"/>'+(s=='+'?'<path d="M6 0v12" stroke-width="2"/>':''));
us.innerHTML='<colgroup>'+W.map(w=>`<col style="width:${w}px">`).join('')+'</colgroup><tr><th rowspan="2"></th><th colspan="6" class="text-center">Default</th><th colspan="5" class="text-center">Extension</th></tr><tr>'
 +['PrefixID','Type','URL','CacheLevel','Version','Commu...','IncludeSub-...','FileExtension','ServiceList','DatasetLayo...','Search Column'].map(t=>`<th>${t}</th>`).join('')+'</tr>'
 +R.map(r=>'<tr>'+W.map((w,i)=>{let t=r[i]||'';if(!i)return `<td class="pl">${sign(t)}</td>`;const off=!t||t[0]=='~';return `<td class="${off?'off':''}" ${t[0]=='~'?'style="color:#a8a8ab"':''}>${t.replace('~','')}</td>`}).join('')+'</tr>').join('');
</script>
</body>
</html>
